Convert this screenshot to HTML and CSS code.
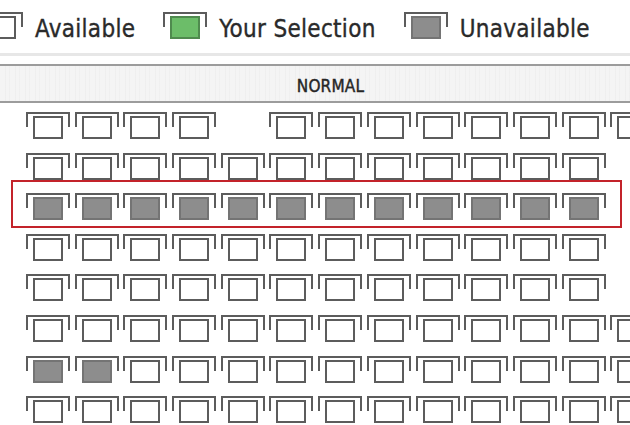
FILE: index.html
```html
<!DOCTYPE html>
<html lang="en">
<head>
<meta charset="utf-8">
<title>Seat selection</title>
<link rel="stylesheet" href="styles.css">
</head>
<body>
<div class="page">
  <div class="legend">
    <div class="legend-item">
      <div class="seat"><div class="cushion"></div></div>
      <span class="legend-label">Available</span>
    </div>
    <div class="legend-item">
      <div class="seat seat--selected"><div class="cushion"></div></div>
      <span class="legend-label">Your Selection</span>
    </div>
    <div class="legend-item">
      <div class="seat seat--taken"><div class="cushion"></div></div>
      <span class="legend-label">Unavailable</span>
    </div>
  </div>

  <div class="screen">
    <div class="screen-bar">NORMAL</div>
  </div>

  <div class="seating">
    <div class="row">
      <div class="seat"><div class="cushion"></div></div>
      <div class="seat"><div class="cushion"></div></div>
      <div class="seat"><div class="cushion"></div></div>
      <div class="seat"><div class="cushion"></div></div>
      <div class="seat seat--gap"></div>
      <div class="seat"><div class="cushion"></div></div>
      <div class="seat"><div class="cushion"></div></div>
      <div class="seat"><div class="cushion"></div></div>
      <div class="seat"><div class="cushion"></div></div>
      <div class="seat"><div class="cushion"></div></div>
      <div class="seat"><div class="cushion"></div></div>
      <div class="seat"><div class="cushion"></div></div>
      <div class="seat"><div class="cushion"></div></div>
    </div>
    <div class="row">
      <div class="seat"><div class="cushion"></div></div>
      <div class="seat"><div class="cushion"></div></div>
      <div class="seat"><div class="cushion"></div></div>
      <div class="seat"><div class="cushion"></div></div>
      <div class="seat"><div class="cushion"></div></div>
      <div class="seat"><div class="cushion"></div></div>
      <div class="seat"><div class="cushion"></div></div>
      <div class="seat"><div class="cushion"></div></div>
      <div class="seat"><div class="cushion"></div></div>
      <div class="seat"><div class="cushion"></div></div>
      <div class="seat"><div class="cushion"></div></div>
      <div class="seat"><div class="cushion"></div></div>
    </div>
    <div class="highlight">
      <div class="row">
        <div class="seat seat--taken"><div class="cushion"></div></div>
        <div class="seat seat--taken"><div class="cushion"></div></div>
        <div class="seat seat--taken"><div class="cushion"></div></div>
        <div class="seat seat--taken"><div class="cushion"></div></div>
        <div class="seat seat--taken"><div class="cushion"></div></div>
        <div class="seat seat--taken"><div class="cushion"></div></div>
        <div class="seat seat--taken"><div class="cushion"></div></div>
        <div class="seat seat--taken"><div class="cushion"></div></div>
        <div class="seat seat--taken"><div class="cushion"></div></div>
        <div class="seat seat--taken"><div class="cushion"></div></div>
        <div class="seat seat--taken"><div class="cushion"></div></div>
        <div class="seat seat--taken"><div class="cushion"></div></div>
      </div>
    </div>
    <div class="row">
      <div class="seat"><div class="cushion"></div></div>
      <div class="seat"><div class="cushion"></div></div>
      <div class="seat"><div class="cushion"></div></div>
      <div class="seat"><div class="cushion"></div></div>
      <div class="seat"><div class="cushion"></div></div>
      <div class="seat"><div class="cushion"></div></div>
      <div class="seat"><div class="cushion"></div></div>
      <div class="seat"><div class="cushion"></div></div>
      <div class="seat"><div class="cushion"></div></div>
      <div class="seat"><div class="cushion"></div></div>
      <div class="seat"><div class="cushion"></div></div>
      <div class="seat"><div class="cushion"></div></div>
    </div>
    <div class="row">
      <div class="seat"><div class="cushion"></div></div>
      <div class="seat"><div class="cushion"></div></div>
      <div class="seat"><div class="cushion"></div></div>
      <div class="seat"><div class="cushion"></div></div>
      <div class="seat"><div class="cushion"></div></div>
      <div class="seat"><div class="cushion"></div></div>
      <div class="seat"><div class="cushion"></div></div>
      <div class="seat"><div class="cushion"></div></div>
      <div class="seat"><div class="cushion"></div></div>
      <div class="seat"><div class="cushion"></div></div>
      <div class="seat"><div class="cushion"></div></div>
      <div class="seat"><div class="cushion"></div></div>
    </div>
    <div class="row">
      <div class="seat"><div class="cushion"></div></div>
      <div class="seat"><div class="cushion"></div></div>
      <div class="seat"><div class="cushion"></div></div>
      <div class="seat"><div class="cushion"></div></div>
      <div class="seat"><div class="cushion"></div></div>
      <div class="seat"><div class="cushion"></div></div>
      <div class="seat"><div class="cushion"></div></div>
      <div class="seat"><div class="cushion"></div></div>
      <div class="seat"><div class="cushion"></div></div>
      <div class="seat"><div class="cushion"></div></div>
      <div class="seat"><div class="cushion"></div></div>
      <div class="seat"><div class="cushion"></div></div>
      <div class="seat"><div class="cushion"></div></div>
    </div>
    <div class="row">
      <div class="seat seat--taken"><div class="cushion"></div></div>
      <div class="seat seat--taken"><div class="cushion"></div></div>
      <div class="seat"><div class="cushion"></div></div>
      <div class="seat"><div class="cushion"></div></div>
      <div class="seat"><div class="cushion"></div></div>
      <div class="seat"><div class="cushion"></div></div>
      <div class="seat"><div class="cushion"></div></div>
      <div class="seat"><div class="cushion"></div></div>
      <div class="seat"><div class="cushion"></div></div>
      <div class="seat"><div class="cushion"></div></div>
      <div class="seat"><div class="cushion"></div></div>
      <div class="seat"><div class="cushion"></div></div>
      <div class="seat"><div class="cushion"></div></div>
    </div>
    <div class="row">
      <div class="seat"><div class="cushion"></div></div>
      <div class="seat"><div class="cushion"></div></div>
      <div class="seat"><div class="cushion"></div></div>
      <div class="seat"><div class="cushion"></div></div>
      <div class="seat"><div class="cushion"></div></div>
      <div class="seat"><div class="cushion"></div></div>
      <div class="seat"><div class="cushion"></div></div>
      <div class="seat"><div class="cushion"></div></div>
      <div class="seat"><div class="cushion"></div></div>
      <div class="seat"><div class="cushion"></div></div>
      <div class="seat"><div class="cushion"></div></div>
      <div class="seat"><div class="cushion"></div></div>
      <div class="seat"><div class="cushion"></div></div>
    </div>
  </div>
</div>
</body>
</html>
```

FILE: styles.css
```css
html, body {
  margin: 0;
  padding: 0;
  background: #ffffff;
  overflow: hidden;
}

.page {
  width: 630px;
  height: 425px;
  overflow: hidden;
  font-family: "DejaVu Sans Condensed", "DejaVu Sans", sans-serif;
  color: #2a2a2a;
}

/* ---------- legend ---------- */
.legend {
  display: flex;
  align-items: flex-start;
  gap: 28px;
  margin-left: -21px;
  padding-top: 12px;
  height: 41px;
}

.legend-item {
  display: flex;
  align-items: flex-start;
  gap: 12px;
}

.legend-label {
  font-size: 24px;
  line-height: 28px;
  padding-top: 3px;
  letter-spacing: 0.3px;
  white-space: nowrap;
  -webkit-text-stroke: 0.35px #2a2a2a;
}

/* ---------- screen band ---------- */
.screen {
  border-top: 3px solid #e7e7e7;
  padding-top: 8px;
}

.screen-bar {
  height: 39px;
  box-sizing: border-box;
  border-top: 2px solid #9c9c9c;
  border-bottom: 2px solid #9c9c9c;
  background-color: #f4f4f4;
  background-image: repeating-linear-gradient(90deg, rgba(0,0,0,0) 0 5px, rgba(0,0,0,0.025) 5px 6px, rgba(0,0,0,0) 6px 9px, rgba(0,0,0,0.02) 9px 10px);
  padding-left: 31px;
  padding-top: 6px;
  text-align: center;
  font-size: 17px;
  line-height: 29px;
  color: #262626;
  -webkit-text-stroke: 0.4px #262626;
  letter-spacing: 0.2px;
}

/* ---------- seating ---------- */
.seating {
  display: flex;
  flex-direction: column;
  gap: 13.6px;
  padding-left: 26px;
  margin-top: 9px;
}

.row {
  display: flex;
  gap: 4.7px;
}

.highlight {
  margin: -13px 8px -8px -15px;
  border: 2px solid #c3232a;
  padding: 11px 0 6px 13px;
}

.seat {
  --line: #5c5c5c;
  flex: 0 0 44px;
  width: 44px;
  height: 27px;
  box-sizing: border-box;
  padding-top: 4px;
  display: flex;
  justify-content: center;
  align-items: flex-start;
  background-image:
    linear-gradient(var(--line), var(--line)),
    linear-gradient(var(--line), var(--line)),
    linear-gradient(var(--line), var(--line));
  background-size: 100% 2px, 2px 15px, 2px 15px;
  background-position: left top, left top, right top;
  background-repeat: no-repeat;
}

.cushion {
  width: 30px;
  height: 23px;
  box-sizing: border-box;
  border: 2px solid #5c5c5c;
  background: #ffffff;
}

.seat--taken .cushion {
  background: #8d8d8d;
  border-color: #747474;
}

.seat--selected .cushion {
  background: #6cbd69;
  border-color: #4f8a4e;
}

.seat--gap {
  visibility: hidden;
}
```
